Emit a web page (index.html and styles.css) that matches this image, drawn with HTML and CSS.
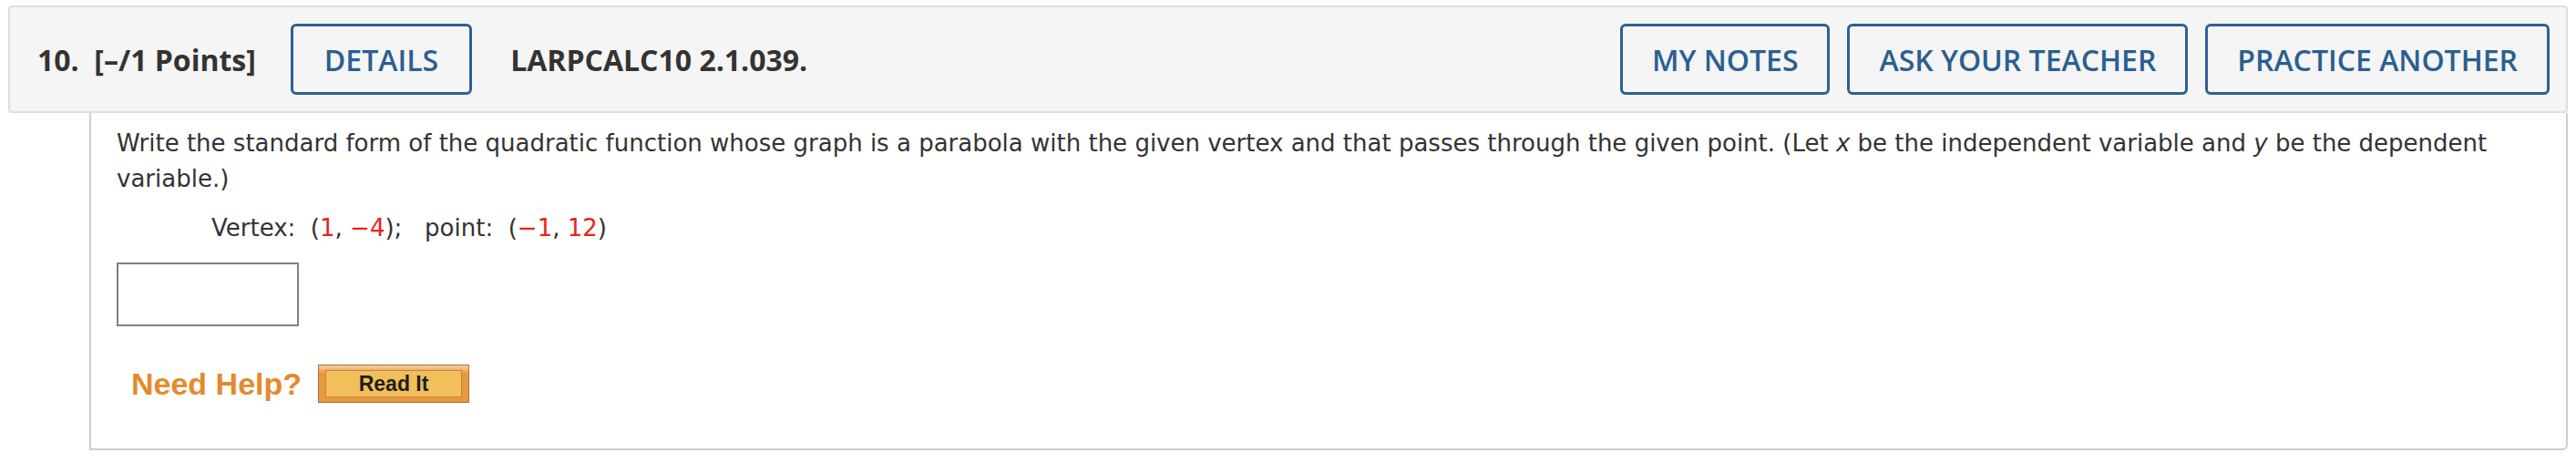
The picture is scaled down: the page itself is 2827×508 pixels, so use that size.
FILE: index.html
```html
<!DOCTYPE html>
<html>
<head>
<meta charset="utf-8">
<link rel="stylesheet" href="styles.css">
</head>
<body>
<div class="question">
  <div class="q-header">
    <div class="q-title">10.&nbsp; [–/1 Points]</div>
    <button class="btn btn-details">DETAILS</button>
    <div class="q-code">LARPCALC10 2.1.039.</div>
    <div class="spacer"></div>
    <button class="btn">MY NOTES</button>
    <button class="btn">ASK YOUR TEACHER</button>
    <button class="btn">PRACTICE ANOTHER</button>
  </div>
  <div class="q-body">
    <p class="prompt">Write the standard form of the quadratic function whose graph is a parabola with the given vertex and that passes through the given point. (Let <i>x</i> be the independent variable and <i>y</i> be the dependent variable.)</p>
    <p class="given">Vertex:&nbsp; (<span class="red">1</span>, <span class="red">−4</span>);&nbsp;&nbsp; point:&nbsp; (<span class="red">−1</span>, <span class="red">12</span>)</p>
    <div class="answer"></div>
    <div class="help">
      <span class="need">Need Help?</span>
      <span class="readit"><span class="readit-inner">Read It</span></span>
    </div>
  </div>
</div>
</body>
</html>
```
FILE: styles.css
```css
html, body { margin: 0; padding: 0; background: #fff; }
.question { margin: 6px 9px 0 9px; }
.q-header {
  display: flex;
  align-items: center;
  height: 114px;
  background: #f5f5f5;
  border: 2px solid #dedede;
  border-radius: 4px;
  padding: 0 18px 0 30px;
  font-family: "Open Sans", sans-serif;
  color: #333;
}
.q-title { font-weight: 700; font-size: 32px; margin-right: 38px; }
.q-code { font-weight: 700; font-size: 32px; margin-left: 42px; }
.spacer { flex: 1; }
.btn {
  font-family: "Open Sans", sans-serif;
  font-size: 32px;
  font-weight: 600;
  color: #2a5f91;
  background: transparent;
  border: 3px solid #2e6093;
  border-radius: 6px;
  height: 78px;
  padding: 0 32px;
  margin-left: 19px;
}
.btn-details { margin-left: 0; padding: 0 34px; }
.q-code + .spacer + .btn { margin-left: 0; }
.q-body {
  margin-left: 89px;
  border: 2px solid #cfcfcf;
  border-top: none;
  border-radius: 0 0 6px 0;
  padding: 14px 28px 0 28px;
  height: 370px;
  box-sizing: border-box;
  font-family: "DejaVu Sans", Verdana, sans-serif;
  font-size: 26px;
  color: #333;
}
.prompt { margin: 0; line-height: 39px; }
.given { margin: 15px 0 0 104px; line-height: 39px; }
.red { color: #e8231b; }
.answer {
  width: 196px;
  height: 66px;
  border: 2px solid #808080;
  margin-top: 18px;
}
.help { display: flex; align-items: center; margin-top: 42px; padding-left: 16px; }
.need {
  font-family: "Liberation Sans", Arial, sans-serif;
  font-weight: 700;
  font-size: 34px;
  color: #e58a2c;
  margin-right: 18px;
}
.readit {
  display: inline-block;
  width: 166px;
  height: 42px;
  box-sizing: border-box;
  border: 1px solid #a9733a;
  background: linear-gradient(#f8d2a8, #e8983f 22%, #e8983f);
  padding: 5px 7px;
}
.readit-inner {
  display: block;
  height: 100%;
  box-sizing: border-box;
  border: 1px solid #c08640;
  background: #f2bf5b;
  font-family: "Liberation Sans", Arial, sans-serif;
  font-weight: 700;
  font-size: 23px;
  color: #1e1e1e;
  text-align: center;
  line-height: 29px;
}
```
